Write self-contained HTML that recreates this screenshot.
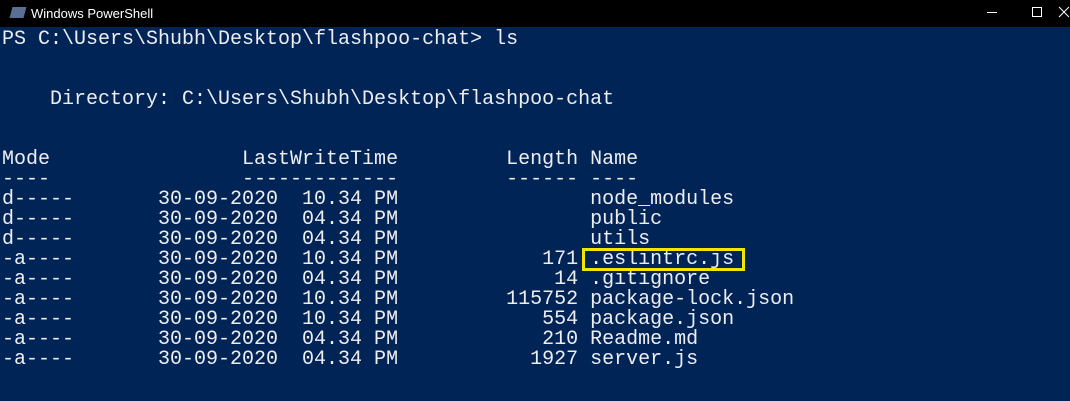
<!DOCTYPE html>
<html><head><style>
html,body{margin:0;padding:0;width:1070px;height:401px;overflow:hidden;background:#012456;}
.tb{position:absolute;left:0;top:0;width:1070px;height:27px;background:#000;color:#fff;font:13px "Liberation Sans",sans-serif;}
.tb .t{position:absolute;left:31px;top:6px;}
.ic{position:absolute;left:11px;top:7px;width:14px;height:11px;background:#5a6f94;transform:skewX(-15deg);}
pre{position:absolute;left:2px;top:30px;margin:0;font:20px/20px "Liberation Mono",monospace;color:#eeedf0;}
.box{position:absolute;left:582px;top:248px;width:157px;height:17px;border:3px solid #f2e500;}
</style></head><body>
<div class="tb"><div class="ic"></div><span class="t">Windows PowerShell</span>
<svg style="position:absolute;left:960px;top:0" width="110" height="27">
<line x1="27" y1="12.5" x2="37" y2="12.5" stroke="#fff"/>
<rect x="72.5" y="7.5" width="9" height="9" fill="none" stroke="#fff"/>
<path d="M99 7 L109 17 M109 7 L99 17" stroke="#fff"/>
</svg></div>
<pre>PS C:\Users\Shubh\Desktop\flashpoo-chat&gt; ls


    Directory: C:\Users\Shubh\Desktop\flashpoo-chat


Mode                LastWriteTime         Length Name
----                -------------         ------ ----
d-----       30-09-2020  10.34 PM                node_modules
d-----       30-09-2020  04.34 PM                public
d-----       30-09-2020  04.34 PM                utils
-a----       30-09-2020  10.34 PM            171 .eslintrc.js
-a----       30-09-2020  04.34 PM             14 .gitignore
-a----       30-09-2020  10.34 PM         115752 package-lock.json
-a----       30-09-2020  10.34 PM            554 package.json
-a----       30-09-2020  04.34 PM            210 Readme.md
-a----       30-09-2020  04.34 PM           1927 server.js</pre>
<div class="box"></div>
</body></html>
